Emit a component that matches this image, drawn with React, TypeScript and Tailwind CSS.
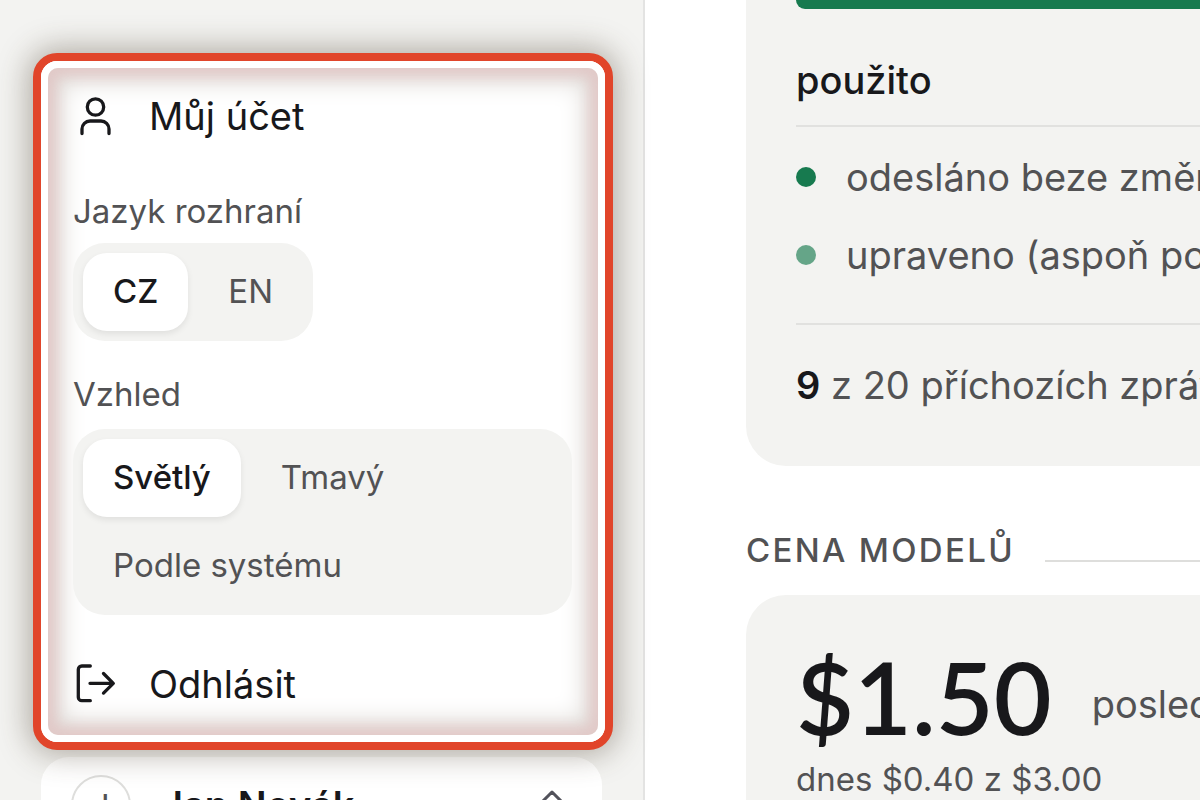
import { useState } from 'react';

function UserIcon() {
  return (
    <svg viewBox="74 95 44 44" className="size-11 shrink-0" fill="none" stroke="currentColor" strokeWidth="3.300" strokeLinecap="round" strokeLinejoin="round" aria-hidden="true">
      <circle cx="96.5" cy="108" r="8.200" />
      <path d="M83 134.500v-4.500a8 8 0 0 1 8-8h11a8 8 0 0 1 8 8v4.500" />
    </svg>
  );
}

function LogoutIcon() {
  return (
    <svg viewBox="74 661 44 44" className="size-11 shrink-0" fill="none" stroke="currentColor" strokeWidth="3.300" strokeLinecap="round" strokeLinejoin="round" aria-hidden="true">
      <path d="M91.300 665h-8.500a3.500 3.500 0 0 0-3.500 3.500v27.700a3.500 3.500 0 0 0 3.500 3.500h8.500M91 682.300h23M104.500 672.500l9.800 9.800-9.800 9.800" />
    </svg>
  );
}

type SegmentProps = { label: string; options: string[]; className: string };

function Segmented({ label, options, className }: SegmentProps) {
  const [active, setActive] = useState(options[0]);
  return (
    <div role="group" aria-label={label} className={`flex flex-wrap gap-[10px] rounded-[32px] bg-[#f3f3f1] p-[10px] ${className}`}>
      {options.map((option) => (
        <button
          key={option}
          type="button"
          aria-pressed={option === active}
          onClick={() => setActive(option)}
          className={
            option === active
              ? 'h-[78px] rounded-3xl bg-white px-[30px] font-medium text-[#18181b] shadow-[0_3px_6px_rgba(0,0,0,0.08)]'
              : 'h-[78px] rounded-3xl px-[30px] text-[#525254]'
          }
        >
          {option}
        </button>
      ))}
    </div>
  );
}

function AccountMenu() {
  return (
    <div className="relative z-10 rounded-3xl border-8 border-[#e1452a] bg-white shadow-[0_0_30px_5px_rgba(70,58,40,0.38)]">
      <div className="rounded-2xl border-[7px] border-white">
        <div className="flex flex-col rounded-[10px] pt-5 pr-[26px] pb-[23px] pl-[25px] shadow-[inset_0_0_12px_9px_rgba(226,190,190,0.6),inset_0_0_24px_14px_#dedad6]">
          <a href="#ucet" className="flex h-14 items-center gap-8 text-[38px] text-[#18181b]">
            <UserIcon />
            Můj účet
          </a>
          <p className="mt-11 mb-[9px] text-[33px] leading-[46px] text-[#525254]">Jazyk rozhraní</p>
          <Segmented label="Jazyk rozhraní" options={['CZ', 'EN']} className="self-start text-[33px]" />
          <p className="mt-[30px] mb-3 text-[33px] leading-[46px] text-[#525254]">Vzhled</p>
          <Segmented label="Vzhled" options={['Světlý', 'Tmavý', 'Podle systému']} className="text-[33px]" />
          <button type="button" className="mt-[41px] flex h-14 items-center gap-8 text-left text-[38px] text-[#18181b]">
            <LogoutIcon />
            Odhlásit
          </button>
        </div>
      </div>
    </div>
  );
}

function AccountButton() {
  return (
    <button type="button" className="mt-[7px] mr-[11px] ml-2 flex h-24 shrink-0 items-center rounded-[28px] bg-white px-[30px] text-left">
      <span className="flex size-[60px] items-center justify-center rounded-full border-2 border-[#dededc] text-[28px] font-medium text-[#525254]">J</span>
      <span className="ml-[30px] flex-1 text-[38px] font-semibold text-[#18181b]">Jan Novák</span>
      <svg viewBox="0 0 40 40" className="size-10" fill="none" stroke="#52525b" strokeWidth="3" strokeLinecap="round" strokeLinejoin="round" aria-hidden="true">
        <path d="M10 17l10-10 10 10M10 24l10 10 10-10" />
      </svg>
    </button>
  );
}

export default function App() {
  return (
    <div className="flex h-screen overflow-hidden bg-white font-['Inter',sans-serif] text-[#525254]">
      <aside className="flex w-[645px] shrink-0 flex-col border-r-2 border-[#e3e3e2] bg-[#f3f3f1] pt-[53px] pr-[30px] pl-[33px]">
        <AccountMenu />
        <AccountButton />
      </aside>
      <main className="min-w-0 flex-1 overflow-hidden pl-[101px] whitespace-nowrap">
        <section className="rounded-bl-[40px] bg-[#f3f3f1] pb-[53px] pl-[50px]">
          <div className="h-[9px] rounded-bl-[14px] bg-[#177a4f]" />
          <h2 className="border-b-2 border-[#e1e1df] pt-[43px] pb-[17px] text-[38px] leading-[56px] font-medium text-[#18181b]">použito</h2>
          <ul className="flex flex-col gap-[22px] pt-[22px] pb-10 text-[38px] leading-[56px]">
            <li className="flex items-center gap-[30px]">
              <span className="size-5 shrink-0 rounded-full bg-[#177a4f]" />
              odesláno beze změn
            </li>
            <li className="flex items-center gap-[30px]">
              <span className="size-5 shrink-0 rounded-full bg-[#65a588]" />
              upraveno (aspoň po
            </li>
          </ul>
          <p className="border-t-2 border-[#e1e1df] pt-8 text-[38px] leading-[56px]">
            <strong className="font-semibold text-[#18181b]">9</strong> z 20 příchozích zpráv
          </p>
        </section>
        <div className="flex items-center gap-[30px] pt-[61px] pb-[22px]">
          <h2 className="text-[33px] leading-[46px] font-medium tracking-[0.07em]">CENA MODELŮ</h2>
          <span className="mt-[22px] h-[2px] flex-1 bg-[#dededc]" />
        </div>
        <section className="rounded-tl-[40px] bg-[#f3f3f1] pt-[47px] pb-10 pl-[50px]">
          <p className="flex items-center gap-10 text-[38px]">
            <strong className="font-['Lato',sans-serif] text-[100px] leading-[108px] font-semibold text-[#18181b]">$1.50</strong>
            <span className="pt-4">posled</span>
          </p>
          <p className="pt-1 text-[33px] leading-[50px]">dnes $0.40 z $3.00</p>
        </section>
      </main>
    </div>
  );
}
